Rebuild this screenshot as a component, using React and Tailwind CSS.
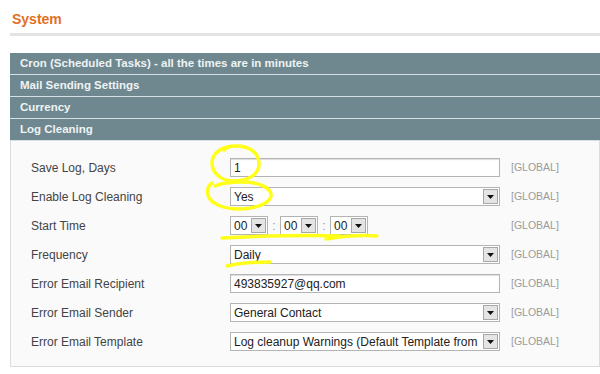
import React from 'react'

const font = { fontFamily: '"Liberation Sans", Arial, sans-serif' }

const sections = [
  'Cron (Scheduled Tasks) - all the times are in minutes',
  'Mail Sending Settings',
  'Currency',
  'Log Cleaning',
]

function Arrow() {
  return (
    <span className="flex h-[15px] w-[15px] shrink-0 items-center justify-center border border-[#a8a8a8] bg-[#e4e4e4]">
      <svg width="7" height="4" viewBox="0 0 7 4">
        <path d="M0 0h7L3.5 4z" fill="#111" />
      </svg>
    </span>
  )
}

function Input({ value }) {
  return (
    <div className="flex h-[19px] w-[270px] items-center border border-[#b4b4b4] bg-white pl-[3px] text-[12px] text-[#222] shadow-[inset_0_1px_1px_#ddd]">
      {value}
    </div>
  )
}

function Select({ value, width = 'w-[270px]' }) {
  return (
    <div className={`flex h-[19px] ${width} items-center border border-[#b4b4b4] bg-white pl-[3px] pr-px text-[12px] text-[#222]`}>
      <span className="min-w-0 flex-1 whitespace-nowrap">{value}</span>
      <Arrow />
    </div>
  )
}

function TimeSelect() {
  return (
    <div className="flex w-[270px] items-center">
      <Select value="00" width="w-[38px]" />
      <span className="w-[12px] text-center text-[12px] text-[#999]">:</span>
      <Select value="00" width="w-[38px]" />
      <span className="w-[12px] text-center text-[12px] text-[#999]">:</span>
      <Select value="00" width="w-[38px]" />
    </div>
  )
}

const rows = [
  { label: 'Save Log, Days', field: <Input value="1" /> },
  { label: 'Enable Log Cleaning', field: <Select value="Yes" /> },
  { label: 'Start Time', field: <TimeSelect /> },
  { label: 'Frequency', field: <Select value="Daily" /> },
  { label: 'Error Email Recipient', field: <Input value="493835927@qq.com" /> },
  { label: 'Error Email Sender', field: <Select value="General Contact" /> },
  { label: 'Error Email Template', field: <Select value="Log cleanup Warnings (Default Template from" /> },
]

export default function App() {
  return (
    <div className="relative h-[374px] w-[600px] overflow-hidden bg-white" style={font}>
      <h3 className="pl-[12px] pt-[11px] text-[14px] font-bold leading-[16px] text-[#e2701f]">System</h3>
      <div className="ml-[10px] mt-[6px] h-[3px] bg-[#e3e3e3]" />

      <div className="ml-[10px] mt-[17px]">
        {sections.map((s) => (
          <div
            key={s}
            className="flex h-[22px] items-center border-b border-[#d4e0e3] bg-[#6f8890] pl-[10px] text-[11.5px] font-bold text-[#eef3f4]"
          >
            {s}
          </div>
        ))}

        {/* Log Cleaning fields */}
        <div className="border border-t-0 border-[#dcdcdc] bg-[#fafafa] pb-[10px] pl-[20px] pt-[12px]">
          {rows.map((r) => (
            <div key={r.label} className="flex h-[29px] items-center">
              <span className="w-[199px] text-[12px] text-[#444]">{r.label}</span>
              {r.field}
              <span className="ml-[11px] text-[10.5px] text-[#9a9a9a]">[GLOBAL]</span>
            </div>
          ))}
        </div>
      </div>

      {/* yellow marker annotations */}
      <svg className="pointer-events-none absolute left-0 top-0" width="600" height="374">
        <g fill="none" stroke="#ffff1a" strokeWidth="3.5" strokeLinecap="round">
          <path d="M236 146c-14 0-24 7-24 17s9 18 22 18 25-6 25-17-9-18-23-18c-6 0-10 2-12 4" />
          <path d="M212 183c-4 3-5 7-4 12 2 8 14 14 31 14s31-6 32-13-10-14-28-14c-12 0-22 1-28 4" />
          <path d="M222 238c40-2 90-3 118-2" />
          <path d="M326 239c18-3 36-4 51-3" />
          <path d="M227 266c14-3 28-4 43-4" />
        </g>
      </svg>
    </div>
  )
}
